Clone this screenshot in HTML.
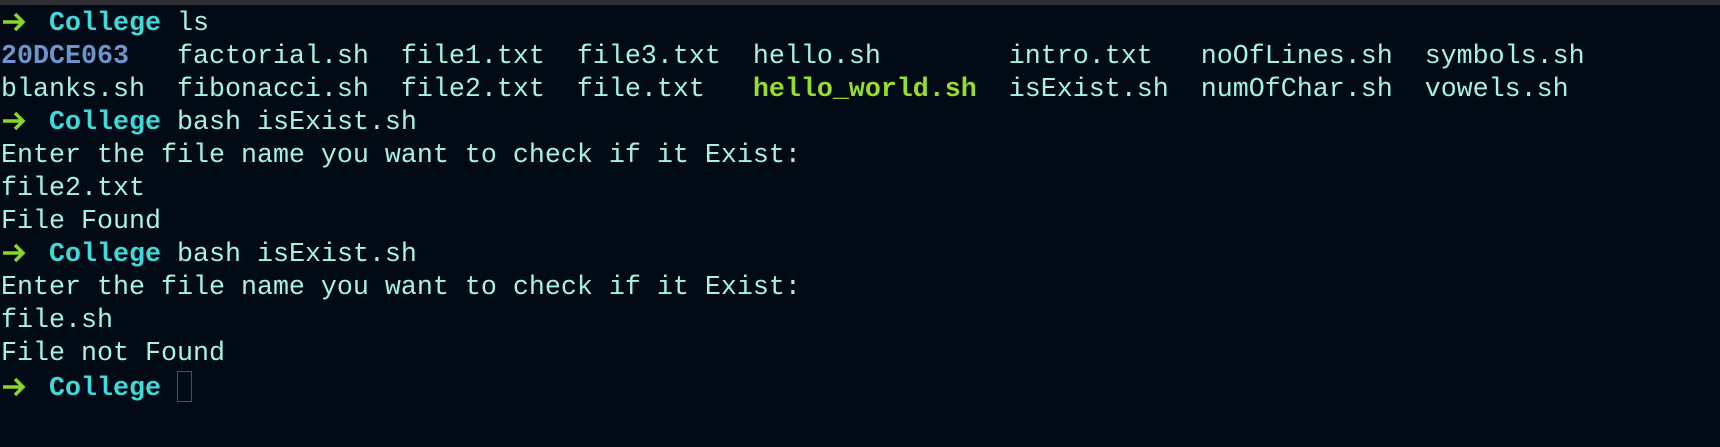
<!DOCTYPE html>
<html><head><meta charset="utf-8"><style>
html,body{margin:0;padding:0;background:#020a15;width:1720px;height:447px;overflow:hidden}
.bar{height:5px;background:#2d2f33}
pre{margin:0;padding:3px 0 0 1px;font-family:"Liberation Mono",monospace;font-size:26.67px;line-height:33px;color:#a8f2e2;white-space:pre}
.a{display:inline-block;width:16px;height:20px;vertical-align:-2px;position:relative}
.a svg{position:absolute;left:1px;top:0}
.c{color:#3fd9d9;font-weight:bold}
.d{color:#6f93cc;font-weight:bold}
.g{color:#98dc2c;font-weight:bold}
.cur{display:inline-block;width:15px;height:31px;border:1px solid #d01818;box-sizing:border-box;vertical-align:-7px}
</style></head><body><div class="bar"></div><pre><span class="a"><svg width="24" height="20" viewBox="0 0 24 20"><path d="M1 10H21M13 2L21 10L13 18" fill="none" stroke="#8ad52b" stroke-width="3.5"/></svg></span>  <span class="c">College</span> ls
<span class="d">20DCE063</span>   factorial.sh  file1.txt  file3.txt  hello.sh        intro.txt   noOfLines.sh  symbols.sh
blanks.sh  fibonacci.sh  file2.txt  file.txt   <span class="g">hello_world.sh</span>  isExist.sh  numOfChar.sh  vowels.sh
<span class="a"><svg width="24" height="20" viewBox="0 0 24 20"><path d="M1 10H21M13 2L21 10L13 18" fill="none" stroke="#8ad52b" stroke-width="3.5"/></svg></span>  <span class="c">College</span> bash isExist.sh
Enter the file name you want to check if it Exist:
file2.txt
File Found
<span class="a"><svg width="24" height="20" viewBox="0 0 24 20"><path d="M1 10H21M13 2L21 10L13 18" fill="none" stroke="#8ad52b" stroke-width="3.5"/></svg></span>  <span class="c">College</span> bash isExist.sh
Enter the file name you want to check if it Exist:
file.sh
File not Found
<span class="a"><svg width="24" height="20" viewBox="0 0 24 20"><path d="M1 10H21M13 2L21 10L13 18" fill="none" stroke="#8ad52b" stroke-width="3.5"/></svg></span>  <span class="c">College</span> <span class="cur"></span></pre></body></html>
